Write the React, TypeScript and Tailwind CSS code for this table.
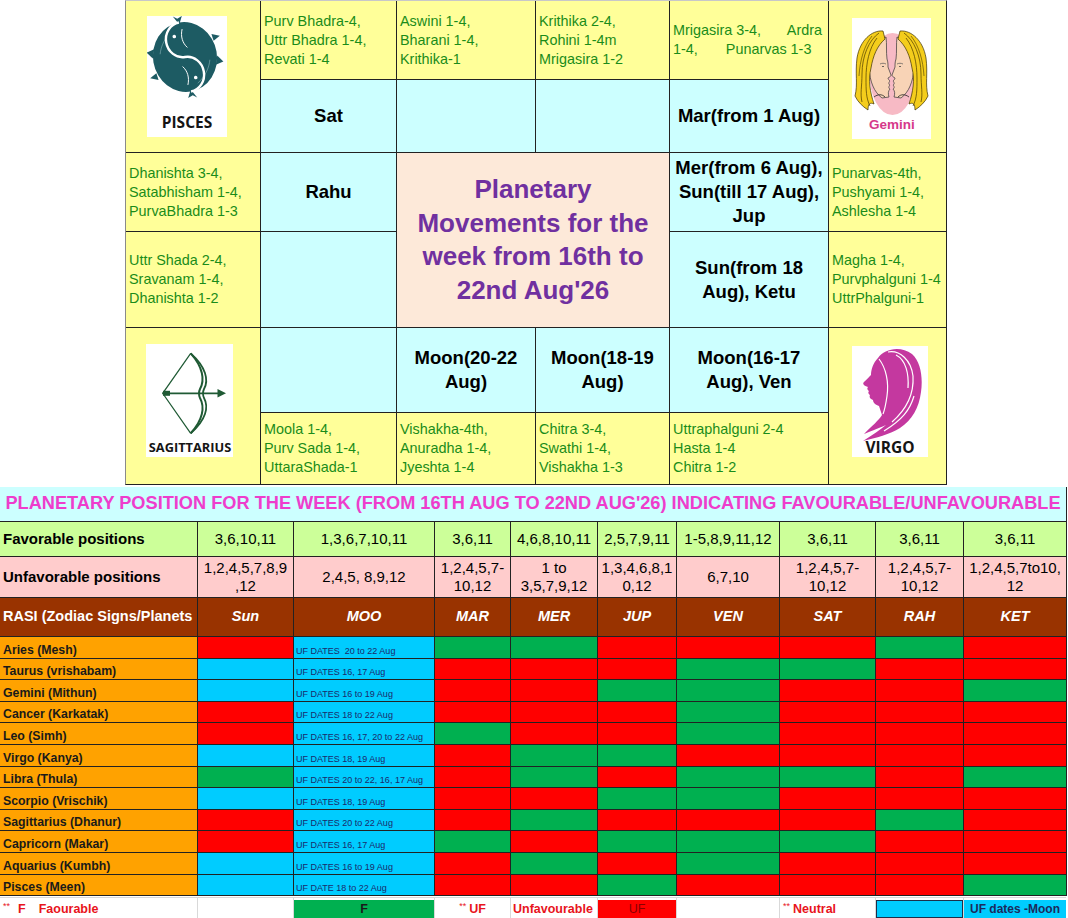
import React from "react";

const chartCols = "grid-cols-[134px_135px_138px_133px_158px_117px]";
const chartRows = "grid-rows-[78px_72px_78px_95px_84px_71px]";
const tableCols = "grid-cols-[197px_95px_140px_75px_86px_78px_102px_95px_87px_102px]";

const nakCells = [
  { pos: "col-start-2 row-start-1", lines: ["Purv Bhadra-4,", "Uttr Bhadra 1-4,", "Revati 1-4"] },
  { pos: "col-start-3 row-start-1", lines: ["Aswini 1-4,", "Bharani 1-4,", "Krithika-1"] },
  { pos: "col-start-4 row-start-1", lines: ["Krithika 2-4,", "Rohini 1-4m", "Mrigasira 1-2"] },
  { pos: "col-start-1 row-start-3", lines: ["Dhanishta 3-4,", "Satabhisham 1-4,", "PurvaBhadra 1-3"] },
  { pos: "col-start-6 row-start-3", lines: ["Punarvas-4th,", "Pushyami 1-4,", "Ashlesha 1-4"] },
  { pos: "col-start-1 row-start-4", lines: ["Uttr Shada 2-4,", "Sravanam 1-4,", "Dhanishta 1-2"] },
  { pos: "col-start-6 row-start-4", lines: ["Magha 1-4,", "Purvphalguni 1-4", "UttrPhalguni-1"] },
  { pos: "col-start-2 row-start-6", lines: ["Moola 1-4,", "Purv Sada 1-4,", "UttaraShada-1"] },
  { pos: "col-start-3 row-start-6", lines: ["Vishakha-4th,", "Anuradha 1-4,", "Jyeshta 1-4"] },
  { pos: "col-start-4 row-start-6", lines: ["Chitra 3-4,", "Swathi 1-4,", "Vishakha 1-3"] },
  { pos: "col-start-5 row-start-6", lines: ["Uttraphalguni 2-4", "Hasta 1-4", "Chitra 1-2"] },
];

const planetCells = [
  { pos: "col-start-2 row-start-2", lines: ["Sat"] },
  { pos: "col-start-3 row-start-2", lines: [] },
  { pos: "col-start-4 row-start-2", lines: [] },
  { pos: "col-start-5 row-start-2", lines: ["Mar(from 1 Aug)"] },
  { pos: "col-start-2 row-start-3", lines: ["Rahu"] },
  { pos: "col-start-5 row-start-3", lines: ["Mer(from 6 Aug),", "Sun(till 17 Aug),", "Jup"] },
  { pos: "col-start-2 row-start-4", lines: [] },
  { pos: "col-start-5 row-start-4", lines: ["Sun(from 18", "Aug), Ketu"] },
  { pos: "col-start-2 row-start-5", lines: [] },
  { pos: "col-start-3 row-start-5", lines: ["Moon(20-22", "Aug)"] },
  { pos: "col-start-4 row-start-5", lines: ["Moon(18-19", "Aug)"] },
  { pos: "col-start-5 row-start-5", lines: ["Moon(16-17", "Aug), Ven"] },
];

const planets = ["Sun", "MOO", "MAR", "MER", "JUP", "VEN", "SAT", "RAH", "KET"];
const fav = ["3,6,10,11", "1,3,6,7,10,11", "3,6,11", "4,6,8,10,11", "2,5,7,9,11", "1-5,8,9,11,12", "3,6,11", "3,6,11", "3,6,11"];
const unfav = [
  ["1,2,4,5,7,8,9", ",12"],
  ["2,4,5, 8,9,12"],
  ["1,2,4,5,7-", "10,12"],
  ["1 to", "3,5,7,9,12"],
  ["1,3,4,6,8,1", "0,12"],
  ["6,7,10"],
  ["1,2,4,5,7-", "10,12"],
  ["1,2,4,5,7-", "10,12"],
  ["1,2,4,5,7to10,", "12"],
];

// colour codes for Sun, MAR, MER, JUP, VEN, SAT, RAH, KET
const rasi: [string, string, string][] = [
  ["Aries (Mesh)", "UF DATES  20 to 22 Aug", "rggrrrgr"],
  ["Taurus (vrishabam)", "UF DATES 16, 17 Aug", "crrrggrr"],
  ["Gemini (Mithun)", "UF DATES 16 to 19 Aug", "crrggrrg"],
  ["Cancer (Karkatak)", "UF DATES 18 to 22 Aug", "rrrrgrrr"],
  ["Leo (Simh)", "UF DATES 16, 17, 20 to 22 Aug", "rgrrgrrr"],
  ["Virgo (Kanya)", "UF DATES 18, 19 Aug", "crggrrrr"],
  ["Libra (Thula)", "UF DATES 20 to 22, 16, 17 Aug", "grgrggrg"],
  ["Scorpio (Vrischik)", "UF DATES 18, 19 Aug", "crrggrrr"],
  ["Sagittarius (Dhanur)", "UF DATES 20 to 22 Aug", "rrgrrrgr"],
  ["Capricorn (Makar)", "UF DATES 16, 17 Aug", "rgrgggrr"],
  ["Aquarius (Kumbh)", "UF DATES 16 to 19 Aug", "crgrgrrr"],
  ["Pisces (Meen)", "UF DATE 18 to 22 Aug", "crrgrrrg"],
];

const fill: Record<string, string> = {
  r: "bg-[#ff0000]",
  g: "bg-[#00b050]",
  c: "bg-[#00ccff]",
};

function PiscesArt() {
  const half = "M38 6 A32 35 0 0 0 38 76 A16 17.5 0 0 0 38 41 A16 17.5 0 0 1 38 6 Z";
  const Fish = () => (
    <g>
      <path d={half} fill="#1d5b63" />
      <path d="M38 8 L33 -1 L37 2 L42 0 Z" fill="#1d5b63" />
      <path d="M9 28 L1 30 L6 37 Z" fill="#1d5b63" />
      <path d="M7 52 L0 56 L8 59 Z" fill="#1d5b63" />
      <circle cx="45" cy="63" r="1.8" fill="#fff" />
      <path d="M34 50 C38 55 39 62 36 69" stroke="#fff" strokeWidth="0.9" fill="none" />
      <path d="M14 34 C16 26 22 18 30 13" stroke="#6b9a9f" strokeWidth="0.8" fill="none" />
    </g>
  );
  return (
    <svg width="80" height="121" viewBox="0 0 80 121" className="block bg-white">
      <g transform="rotate(-10 38 41)">
        <Fish />
        <g transform="rotate(180 38 41)">
          <Fish />
        </g>
        <path d="M38 6 A16 17.5 0 0 0 38 41 A16 17.5 0 0 1 38 76" stroke="#fff" strokeWidth="2.4" fill="none" />
      </g>
      <text x="40" y="112" textAnchor="middle" fontFamily="'Open Sans', sans-serif" fontWeight="700" fontSize="15.5" fill="#151515">
        PISCES
      </text>
    </svg>
  );
}

function GeminiArt() {
  const Head = () => (
    <g>
      <path
        d="M34 19 C24 22 16 34 17 50 C18 64 22 74 30 80 L37 79 C36 76 36 73 38 71 C36 70 37 68 38 67 C36 66 37 64 38 63 C37 62 36 61 36 60 C38 59 39 58 39 57 C38 54 37 52 36 49 C36 46 36 44 35 41 C34 34 35 26 34 19 Z"
        fill="#f8d3b6"
        stroke="#333"
        strokeWidth="0.7"
      />
      <path d="M28 46 C30 45 32 45 34 46" stroke="#555" strokeWidth="0.7" fill="none" />
      <path d="M30 48.5 L32 48.5" stroke="#444" strokeWidth="0.8" />
      <path d="M22 79 C26 76 30 76 33 79" stroke="#222" strokeWidth="0.8" fill="none" />
      <path
        d="M31 13 C20 12 8 22 5 40 C3 56 6 66 3 78 C6 84 10 88 16 92 C16 86 18 84 22 86 C18 74 16 62 19 50 C21 38 25 28 33 21 Z"
        fill="#f4cd1c"
        stroke="#3b2f00"
        strokeWidth="0.7"
      />
      <path d="M27 15 C17 22 10 38 10 56 C10 68 8 76 10 84" stroke="#4a3a00" strokeWidth="0.7" fill="none" />
      <path d="M25 20 C17 30 14 46 14 60 C14 72 14 80 18 88" stroke="#4a3a00" strokeWidth="0.7" fill="none" />
      <path d="M20 18 C12 28 8 42 7 58" stroke="#4a3a00" strokeWidth="0.6" fill="none" />
    </g>
  );
  return (
    <svg width="79" height="121" viewBox="0 0 79 121" className="block bg-white">
      <ellipse cx="40.5" cy="56" rx="23" ry="41" fill="#f7bac5" />
      <Head />
      <g transform="translate(79 0) scale(-1 1)">
        <Head />
      </g>
      <text x="40" y="111" textAnchor="middle" fontFamily="'Liberation Sans', Arial, sans-serif" fontWeight="700" fontSize="13.5" fill="#d6398a">
        Gemini
      </text>
    </svg>
  );
}

function SagittariusArt() {
  return (
    <svg width="87" height="113" viewBox="0 0 87 113" className="block bg-white">
      <g stroke="#1f5a34" fill="none">
        <path d="M44.7 9.3 L16.7 49.3 L44.7 89.3" strokeWidth="1.2" />
        <path d="M44.7 9.3 C57 23 59 36 54 45 Q52 49.3 54 54 C59 63 57 76 44.7 89.3" strokeWidth="2" />
        <path d="M44.7 9.3 C60 23 63 36 58 45 Q56 49.3 58 54 C63 63 60 76 44.7 89.3" strokeWidth="1.8" />
        <path d="M16.7 49.3 L74 49.3" strokeWidth="1.8" />
      </g>
      <rect x="17" y="46.8" width="7" height="5" fill="#1f5a34" />
      <polygon points="80,49.3 71.5,45 71.5,53.6" fill="#1f5a34" />
      <text x="44" y="108" textAnchor="middle" fontFamily="'Open Sans', sans-serif" fontWeight="700" fontSize="12.8" fill="#151515">
        SAGITTARIUS
      </text>
    </svg>
  );
}

function VirgoArt() {
  return (
    <svg width="76" height="111" viewBox="0 0 76 111" className="block bg-white">
      <path
        d="M26 12 C32 3 48 -1 60 8 C69 16 71 32 69 46 C67 62 60 74 48 82 C38 88 24 92 11 95 C20 89 28 84 34 79 C25 83 17 86 12 88 C20 80 27 74 30 69 L27 60 C24 59 21 57 21 54 C18 53 17 51 18 49 C16 48 16 46 17 45 C15 44 15 42 16 41 C12 40 10 38 12 36 C15 33 17 31 19 29 C19 24 21 17 26 12 Z"
        fill="#c4389f"
      />
      <g stroke="#fff" fill="none" strokeWidth="1.2">
        <path d="M27 13 C34 22 37 36 35 50 C34 57 33 63 31 68" />
        <path d="M36 6 C48 4 59 14 61 30 C62 46 56 62 40 76" />
        <path d="M44 9 C54 14 57 28 56 42" />
        <path d="M62 50 C58 64 50 74 32 85" />
      </g>
      <text x="38" y="107" textAnchor="middle" fontFamily="'Open Sans', sans-serif" fontWeight="700" fontSize="15.5" fill="#151515">
        VIRGO
      </text>
    </svg>
  );
}

function LegendCell({ children, className = "" }: { children?: React.ReactNode; className?: string }) {
  return (
    <div className="bg-white pt-[2px]">
      <div className={`flex h-[18px] items-center whitespace-nowrap text-[12.5px] ${className}`}>{children}</div>
    </div>
  );
}

export default function App() {
  return (
    <div className="h-[918px] w-[1068px] overflow-hidden bg-white font-['Liberation_Sans',Arial,sans-serif]">
      {/* Chart */}
      <div
        className={`ml-[125px] grid w-[822px] ${chartCols} ${chartRows} gap-px border border-[#222] border-l-[#8a8a8a] border-t-[#c8c8c8] bg-[#222]`}
      >
        <div className="col-start-1 row-span-2 row-start-1 flex items-center justify-center bg-[#ffff99] pr-[12px]">
          <PiscesArt />
        </div>
        <div className="col-start-6 row-span-2 row-start-1 flex items-center justify-center bg-[#ffff99] pl-[8px] pt-[4px]">
          <GeminiArt />
        </div>
        <div className="col-start-1 row-span-2 row-start-5 flex items-center justify-center bg-[#ffff99] pb-[11px] pr-[7px]">
          <SagittariusArt />
        </div>
        <div className="col-start-6 row-span-2 row-start-5 flex items-center justify-center bg-[#ffff99] pb-[9px] pl-[5px]">
          <VirgoArt />
        </div>

        {nakCells.map((c) => (
          <div
            key={c.pos}
            className={`${c.pos} flex flex-col justify-center bg-[#ffff99] pl-[3px] text-[14.4px] leading-[19px] text-[#1a8c1a]`}
          >
            {c.lines.map((l) => (
              <span key={l} className="whitespace-nowrap">
                {l}
              </span>
            ))}
          </div>
        ))}

        <div className="col-start-5 row-start-1 flex flex-col justify-center bg-[#ffff99] pl-[3px] pr-[6px] text-[14.4px] leading-[19px] text-[#1a8c1a]">
          <div className="flex justify-between whitespace-nowrap">
            <span>Mrigasira 3-4,</span>
            <span>Ardra</span>
          </div>
          <div className="flex gap-[28px] whitespace-nowrap">
            <span>1-4,</span>
            <span>Punarvas 1-3</span>
          </div>
        </div>

        {planetCells.map((c) => (
          <div
            key={c.pos}
            className={`${c.pos} flex flex-col items-center justify-center bg-[#ccffff] text-center text-[18.5px] font-bold leading-[24px] text-black`}
          >
            {c.lines.map((l) => (
              <span key={l} className="whitespace-nowrap">
                {l}
              </span>
            ))}
          </div>
        ))}

        <div className="col-span-2 col-start-3 row-span-2 row-start-3 flex items-center justify-center bg-[#fde9d9] text-center text-[26px] font-bold leading-[33.5px] text-[#7030a0]">
          <p>
            Planetary
            <br />
            Movements for the
            <br />
            week from 16th to
            <br />
            22nd Aug'26
          </p>
        </div>
      </div>

      {/* Table */}
      <div
        className={`mt-[2px] grid w-[1067px] ${tableCols} grid-rows-[34px_34px_40px_38px_repeat(12,20.6px)] gap-px border-b border-r border-[#222] bg-[#222]`}
      >
        <div className="col-span-10 flex items-center justify-center whitespace-nowrap bg-[#ccffff] text-[18.2px] font-bold text-[#ee3dcc]">
          PLANETARY POSITION FOR THE WEEK (FROM 16TH AUG TO 22ND AUG'26) INDICATING FAVOURABLE/UNFAVOURABLE
        </div>

        <div className="flex items-center whitespace-nowrap bg-[#ccff99] pl-[3px] text-[15px] font-bold text-black">
          Favorable positions
        </div>
        {fav.map((v, i) => (
          <div key={i} className="flex items-center justify-center whitespace-nowrap bg-[#ccff99] text-[15px] text-black">
            {v}
          </div>
        ))}

        <div className="flex items-center whitespace-nowrap bg-[#ffcccc] pl-[3px] text-[15px] font-bold text-black">
          Unfavorable positions
        </div>
        {unfav.map((v, i) => (
          <div
            key={i}
            className="flex flex-col items-center justify-center whitespace-nowrap bg-[#ffcccc] text-[15px] leading-[18px] text-black"
          >
            {v.map((l) => (
              <span key={l}>{l}</span>
            ))}
          </div>
        ))}

        <div className="flex items-center overflow-hidden whitespace-nowrap bg-[#993300] pl-[3px] text-[14.5px] font-bold text-white">
          RASI (Zodiac Signs/Planets
        </div>
        {planets.map((p) => (
          <div key={p} className="flex items-center justify-center bg-[#993300] text-[14.5px] font-bold italic text-white">
            {p}
          </div>
        ))}

        {rasi.map(([name, moon, code]) => (
          <React.Fragment key={name}>
            <div className="flex items-end whitespace-nowrap bg-[#ffa200] pl-[3px] text-[12.3px] font-bold leading-[15px] text-[#1a1a1a]">
              {name}
            </div>
            <div className={fill[code[0]]} />
            <div className="flex items-end whitespace-pre bg-[#00ccff] pb-px pl-[2px] text-[9px] leading-[11px] text-[#1b2a6b]">
              {moon}
            </div>
            {code
              .slice(1)
              .split("")
              .map((c, i) => (
                <div key={i} className={fill[c]} />
              ))}
          </React.Fragment>
        ))}
      </div>

      {/* Legend */}
      <div className={`mt-px grid w-[1066px] ${tableCols} h-[24px] gap-x-px border-t border-[#d9d9d9] bg-[#d9d9d9]`}>
        <LegendCell className="pl-[3px] font-bold text-[#e8141c]">
          <span className="self-start text-[9px] font-normal">**</span>
          <span className="ml-[8px]">F</span>
          <span className="ml-[13px]">Faourable</span>
        </LegendCell>
        <LegendCell />
        <LegendCell className="justify-center bg-[#00b050] font-bold text-[#1a1a1a]">F</LegendCell>
        <LegendCell className="justify-center font-bold text-[#e8141c]">
          <span className="self-start text-[9px] font-normal">**</span>
          <span className="ml-[3px]">UF</span>
        </LegendCell>
        <LegendCell className="pl-[2px] font-bold text-[#e8141c]">Unfavourable</LegendCell>
        <LegendCell className="justify-center bg-[#ff0000] text-[#8a0000]">UF</LegendCell>
        <LegendCell />
        <LegendCell className="pl-[3px] font-bold text-[#e8141c]">
          <span className="self-start text-[9px] font-normal">**</span>
          <span className="ml-[3px]">Neutral</span>
        </LegendCell>
        <LegendCell className="border border-[#1c2f4a] bg-[#00ccff]" />
        <LegendCell className="justify-center bg-[#00ccff] text-[12px] font-bold text-[#1b2a5c]">UF dates -Moon</LegendCell>
      </div>
    </div>
  );
}
